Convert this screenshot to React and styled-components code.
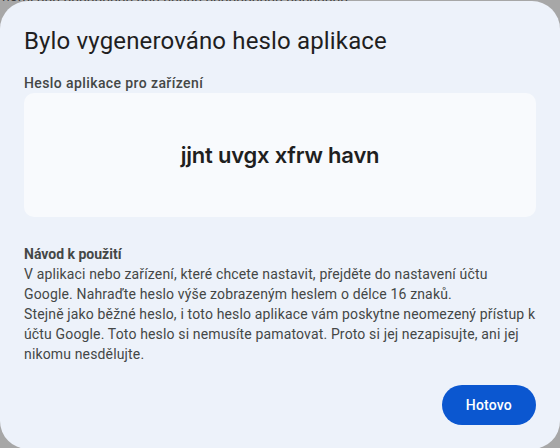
import styled, { createGlobalStyle } from "styled-components";

const GlobalStyle = createGlobalStyle`
  html, body {
    margin: 0;
    padding: 0;
    width: 560px;
    height: 448px;
    overflow: hidden;
    background: #a7a7a7;
  }
  * {
    box-sizing: border-box;
  }
`;

const Backdrop = styled.div`
  position: relative;
  width: 560px;
  height: 448px;
  overflow: hidden;
  background: #a7a7a7;
`;

// text of the page that sits under the scrim, only its lower edge shows
const PageBehind = styled.div`
  margin-top: -11px;
  padding-left: 2px;
  font-family: "Roboto", "Liberation Sans", sans-serif;
  font-size: 14px;
  line-height: 14px;
  color: #3a3a3a;
  white-space: nowrap;
`;

const Dialog = styled.div`
  position: absolute;
  left: 0;
  top: 1px;
  width: 560px;
  display: flex;
  flex-direction: column;
  padding: 24px;
  background: #edf2fa;
  border-radius: 28px;
  font-family: "Roboto", "Liberation Sans", sans-serif;
  color: #1f1f1f;
`;

const Title = styled.h1`
  margin: 0;
  font-size: 24px;
  line-height: 32px;
  font-weight: 400;
  letter-spacing: 0.15px;
  color: #1f1f1f;
`;

const Label = styled.div`
  margin-top: 16px;
  font-size: 14px;
  line-height: 20px;
  font-weight: 500;
  letter-spacing: 0.4px;
  color: #444746;
`;

const PasswordBox = styled.div`
  height: 124px;
  display: flex;
  align-items: center;
  justify-content: center;
  background: #f8fafd;
  border-radius: 10px;
`;

const Password = styled.span`
  font-family: "Inter", "Roboto", sans-serif;
  font-size: 22px;
  font-weight: 600;
  letter-spacing: -0.2px;
  color: #1f1f1f;
`;

const Instructions = styled.div`
  margin-top: 27px;
  font-size: 14px;
  line-height: 20px;
  color: #444746;
`;

const InstructionsTitle = styled.div`
  font-weight: 700;
  color: #444746;
`;

const Paragraph = styled.p`
  margin: 0;
  letter-spacing: 0.15px;
`;

const Actions = styled.div`
  margin-top: 21px;
  display: flex;
  justify-content: flex-end;
`;

const Button = styled.button`
  height: 40px;
  padding: 0 24px;
  border: none;
  border-radius: 20px;
  background: #0b57d0;
  color: #ffffff;
  font-family: "Roboto", "Liberation Sans", sans-serif;
  font-size: 14px;
  font-weight: 500;
  letter-spacing: 0.2px;
  cursor: pointer;
`;

export default function App() {
  return (
    <Backdrop>
      <GlobalStyle />
      <PageBehind>
        nomi nnn nnnnnnnnn nnn nnnnn nnnnnnnnnn nnnnnnnn
      </PageBehind>
      <Dialog>
        <Title>Bylo vygenerováno heslo aplikace</Title>
        <Label>Heslo aplikace pro zařízení</Label>
        <PasswordBox>
          <Password>jjnt uvgx xfrw havn</Password>
        </PasswordBox>
        <Instructions>
          <InstructionsTitle>Návod k použití</InstructionsTitle>
          <Paragraph>
            V aplikaci nebo zařízení, které chcete nastavit, přejděte do
            nastavení účtu Google. Nahraďte heslo výše zobrazeným heslem o
            délce 16&nbsp;znaků.
          </Paragraph>
          <Paragraph>
            Stejně jako běžné heslo, i toto heslo aplikace vám poskytne
            neomezený přístup k účtu Google. Toto heslo si nemusíte pamatovat.
            Proto si jej nezapisujte, ani jej nikomu nesdělujte.
          </Paragraph>
        </Instructions>
        <Actions>
          <Button>Hotovo</Button>
        </Actions>
      </Dialog>
    </Backdrop>
  );
}
